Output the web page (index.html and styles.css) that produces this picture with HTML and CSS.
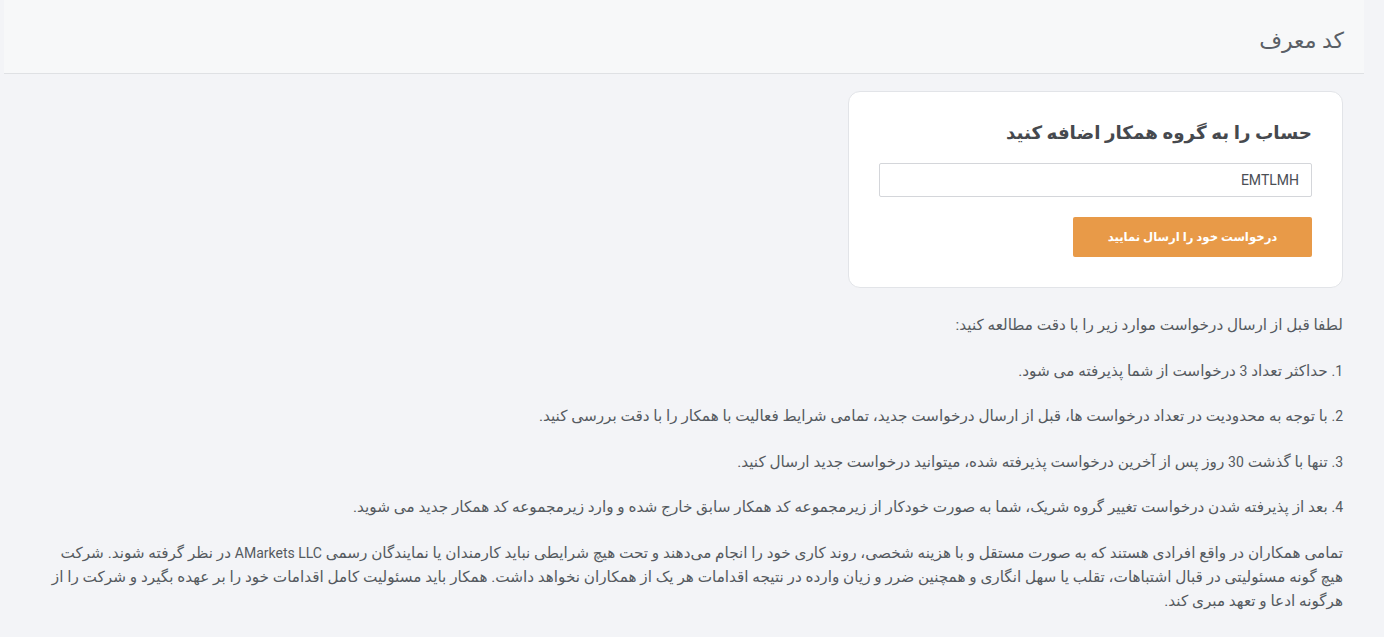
FILE: index.html
```html
<!DOCTYPE html>
<html lang="fa" dir="rtl">
<head>
<meta charset="utf-8">
<title>کد معرف</title>
<link rel="stylesheet" href="styles.css">
</head>
<body>
<div class="page">
  <header class="page-header">
    <h1 class="page-title">کد معرف</h1>
  </header>
  <main class="content">
    <section class="card">
      <h2 class="card-title">حساب را به گروه همکار اضافه کنید</h2>
      <input class="code-input" type="text" value="EMTLMH" dir="rtl">
      <button class="submit-btn" type="button">درخواست خود را ارسال نمایید</button>
    </section>
    <div class="notes">
      <p>لطفا قبل از ارسال درخواست موارد زیر را با دقت مطالعه کنید:</p>
      <p><span class="latin">1.</span> حداکثر تعداد <span class="latin">3</span> درخواست از شما پذیرفته می شود.</p>
      <p><span class="latin">2.</span> با توجه به محدودیت در تعداد درخواست ها، قبل از ارسال درخواست جدید، تمامی شرایط فعالیت با همکار را با دقت بررسی کنید.</p>
      <p><span class="latin">3.</span> تنها با گذشت <span class="latin">30</span> روز پس از آخرین درخواست پذیرفته شده، میتوانید درخواست جدید ارسال کنید.</p>
      <p><span class="latin">4.</span> بعد از پذیرفته شدن درخواست تغییر گروه شریک، شما به صورت خودکار از زیرمجموعه کد همکار سابق خارج شده و وارد زیرمجموعه کد همکار جدید می شوید.</p>
      <p>تمامی همکاران در واقع افرادی هستند که به صورت مستقل و با هزینه شخصی، روند کاری خود را انجام می‌دهند و تحت هیچ شرایطی نباید کارمندان یا نمایندگان رسمی <span class="latin">AMarkets LLC</span> در نظر گرفته شوند. شرکت هیچ گونه مسئولیتی در قبال اشتباهات، تقلب یا سهل انگاری و همچنین ضرر و زیان وارده در نتیجه اقدامات هر یک از همکاران نخواهد داشت. همکار باید مسئولیت کامل اقدامات خود را بر عهده بگیرد و شرکت را از هرگونه ادعا و تعهد مبری کند.</p>
    </div>
  </main>
</div>
</body>
</html>
```

FILE: styles.css
```css
* { box-sizing: border-box; }
html, body {
  margin: 0;
  padding: 0;
  background: #f3f4f7;
}
body {
  font-family: Roboto, "DejaVu Sans", sans-serif;
  color: #555a60;
}
.page {
  padding: 0 20px 0 4px;
}
.page-header {
  background: #f7f8f9;
  border-bottom: 1px solid #dfe1e4;
  height: 74px;
  padding: 8px 20px 0;
  display: flex;
  align-items: center;
}
.page-title {
  margin: 0;
  font-size: 22px;
  font-weight: 400;
  color: #5a5f66;
}
.content {
  padding: 17px 21px 20px 36px;
}
.card {
  width: 495px;
  background: #ffffff;
  border: 1px solid #e2e4e8;
  border-radius: 12px;
  padding: 26px 30px 30px;
  display: flex;
  flex-direction: column;
  align-items: stretch;
}
.card-title {
  margin: 0 0 15px;
  font-size: 18.3px;
  font-weight: 700;
  color: #46494e;
  line-height: 30px;
}
.code-input {
  height: 34px;
  border: 1px solid #d4d6da;
  border-radius: 2px;
  padding: 0 12px;
  font-family: Roboto, "DejaVu Sans", sans-serif;
  font-size: 14px;
  color: #4a4e54;
  background: #fff;
  text-align: right;
}
.submit-btn {
  align-self: flex-start;
  margin-top: 20px;
  width: 239px;
  height: 40px;
  background: #e89a48;
  border: none;
  border-radius: 2px;
  color: #ffffff;
  font-family: Roboto, "DejaVu Sans", sans-serif;
  font-size: 11.7px;
  font-weight: 700;
}
.notes {
  margin-top: 25px;
  font-size: 15.25px;
  line-height: 24px;
  color: #555a60;
}
.notes p {
  margin: 0 0 21.5px;
}
.latin {
  font-size: 14px;
}
```
